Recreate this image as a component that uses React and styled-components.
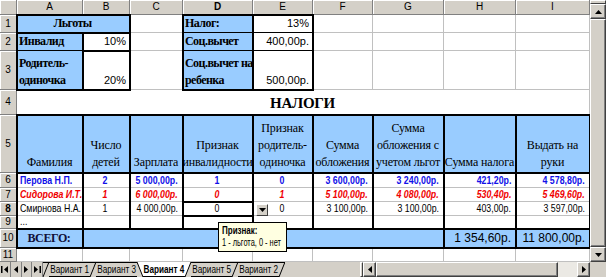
import React from 'react';
import styled, { createGlobalStyle, css } from 'styled-components';

const BLUE = '#99ccff';
const GRID = '#c0c0c0';
const FACE = '#d4d0c8';
const SHADOW = '#808080';
const DARK = '#404040';

const COL_WIDTHS = [66, 47, 53, 70, 60, 60, 71, 72, 74];
const ROW_HEIGHTS = [18, 18, 39, 25, 58, 15, 14, 14, 13, 19, 14];
const LETTERS = ['A', 'B', 'C', 'D', 'E', 'F', 'G', 'H', 'I'];
const ACTIVE = { r: 8, c: 4 };

const GlobalStyle = createGlobalStyle`
  html, body { margin: 0; padding: 0; overflow: hidden; background: #fff; }
  #root { width: 606px; height: 277px; }
`;

const Window = styled.div`
  width: 606px;
  height: 277px;
  display: flex;
  flex-direction: column;
  background: #fff;
  overflow: hidden;
  font-family: "Liberation Sans", Arial, sans-serif;
`;

const Workspace = styled.div`
  display: flex;
  height: 262px;
  flex: none;
`;

const Sheet = styled.div`
  position: relative;
  width: 590px;
  height: 262px;
  flex: none;
  display: grid;
  grid-template-columns: 17px ${COL_WIDTHS.map((w) => `${w}px`).join(' ')};
  grid-template-rows: 15px ${ROW_HEIGHTS.map((h) => `${h}px`).join(' ')};
  overflow: hidden;
`;

const headerBase = css`
  box-sizing: border-box;
  background: ${FACE};
  border-right: 1px solid ${SHADOW};
  border-bottom: 1px solid ${SHADOW};
  box-shadow: inset 1px 1px 0 #fff;
  display: flex;
  align-items: center;
  justify-content: center;
  font-family: "Liberation Sans", Arial, sans-serif;
  font-size: 10px;
  line-height: 1;
  font-weight: ${(p) => (p.$active ? 'bold' : 'normal')};
  color: #000;
  overflow: hidden;
`;

const Corner = styled.div`
  ${headerBase};
  grid-column: 1;
  grid-row: 1;
`;

const ColHead = styled.div`
  ${headerBase};
  grid-column: ${(p) => p.$c + 1};
  grid-row: 1;
`;

const RowHead = styled.div`
  ${headerBase};
  grid-column: 1;
  grid-row: ${(p) => p.$r + 1};
`;

const justify = { left: 'flex-start', center: 'center', right: 'flex-end' };

const Cell = styled.div`
  grid-column: ${(p) => p.$c + 1} / span ${(p) => p.$span || 1};
  grid-row: ${(p) => p.$r + 1};
  box-sizing: border-box;
  min-width: 0;
  display: flex;
  align-items: flex-end;
  justify-content: ${(p) => justify[p.$align || 'left']};
  text-align: ${(p) => p.$align || 'left'};
  padding: 0 3px 0 2px;
  background: ${(p) => p.$fill || '#fff'};
  border-right: 1px solid ${(p) => p.$fill || GRID};
  border-bottom: 1px solid ${(p) => p.$line || p.$fill || GRID};
  white-space: nowrap;
  overflow: hidden;
  color: #000;
`;

const LabelCell = styled(Cell)`
  font-family: "Liberation Serif", "Times New Roman", serif;
  font-weight: bold;
  font-size: 12px;
  line-height: 17px;
  letter-spacing: -0.55px;
  padding-left: 2px;
`;

const AmountCell = styled(Cell)`
  font-family: "Liberation Sans", Arial, sans-serif;
  font-size: 11px;
  line-height: 17px;
  padding-right: 3px;
`;

const TitleCell = styled(Cell)`
  align-items: center;
  font-family: "Liberation Serif", "Times New Roman", serif;
  font-weight: bold;
  font-size: 15px;
  line-height: 1;
  letter-spacing: -0.3px;
  padding-top: 2px;
`;

const HeadCell = styled(Cell)`
  font-family: "Liberation Serif", "Times New Roman", serif;
  font-size: 12px;
  line-height: 17px;
  letter-spacing: -0.15px;
  overflow: visible;
  padding: 0 1px 1px;
`;

const tones = {
  blue: css`color: #1010e8; font-weight: bold;`,
  red: css`color: #f00000; font-weight: bold; font-style: italic;`,
  plain: css`color: #000; font-weight: normal;`,
};

const DataCell = styled(Cell)`
  font-family: "Liberation Sans", Arial, sans-serif;
  font-size: 11px;
  line-height: 13px;
  padding: 0 4px 0 3px;
  ${(p) => tones[p.$tone || 'plain']};
`;

const TotalLabelCell = styled(Cell)`
  align-items: center;
  font-family: "Liberation Serif", "Times New Roman", serif;
  font-weight: bold;
  font-size: 12px;
  line-height: 1;
  letter-spacing: -0.4px;
  color: #10103a;
`;

const TotalAmountCell = styled(Cell)`
  align-items: center;
  font-family: "Liberation Sans", Arial, sans-serif;
  font-size: 12px;
  line-height: 1;
  padding-right: 4px;
`;

/* narrow face (Arial Narrow look): the glyphs are condensed horizontally */
const Narrow = styled.span`
  display: inline-block;
  flex: none;
  white-space: nowrap;
  transform: scaleX(${(p) => p.$k || 0.8});
  transform-origin: ${(p) => p.$align || 'left'} center;
`;

const Lines = styled.span`
  display: block;
`;

const Frame = styled.div`
  grid-column: ${(p) => p.$c1 + 1} / ${(p) => p.$c2 + 2};
  grid-row: ${(p) => p.$r1 + 1} / ${(p) => p.$r2 + 2};
  margin: -1px;
  border: 2px solid #000;
  pointer-events: none;
  z-index: 2;
`;

const DropButton = styled.div`
  grid-column: ${ACTIVE.c + 2};
  grid-row: ${ACTIVE.r + 1};
  justify-self: start;
  align-self: end;
  box-sizing: border-box;
  width: 12px;
  height: 12px;
  margin-left: 3px;
  background: ${FACE};
  border: 1px solid;
  border-color: #fff ${DARK} ${DARK} #fff;
  display: flex;
  align-items: center;
  justify-content: center;
  z-index: 3;
`;

const Tooltip = styled.div`
  position: absolute;
  left: 218px;
  top: 222px;
  width: 69px;
  height: 30px;
  box-sizing: border-box;
  padding: 2px 3px;
  background: #ffffe1;
  border: 1px solid #000;
  font-family: "Liberation Sans", Arial, sans-serif;
  font-size: 10px;
  line-height: 12px;
  color: #000;
  white-space: nowrap;
  overflow: hidden;
  z-index: 4;
`;

const TooltipLine = styled.div`
  font-weight: ${(p) => (p.$bold ? 'bold' : 'normal')};
`;

/* ---------- scrollbars & tabs ---------- */

const VScroll = styled.div`
  width: 16px;
  height: 262px;
  display: flex;
  flex-direction: column;
  background: ${FACE};
  flex: none;
`;

const SplitBox = styled.div`
  flex: none;
  box-sizing: border-box;
  width: ${(p) => (p.$vertical ? '3px' : '100%')};
  height: ${(p) => (p.$vertical ? '100%' : '4px')};
  background: ${FACE};
  border: 1px solid;
  border-color: #fff ${DARK} ${DARK} #fff;
`;

const ScrollButton = styled.div`
  flex: none;
  box-sizing: border-box;
  width: ${(p) => p.$w}px;
  height: ${(p) => p.$h}px;
  background: ${FACE};
  border: 1px solid;
  border-color: #fff ${DARK} ${DARK} #fff;
  box-shadow: inset -1px -1px 0 ${SHADOW};
  display: flex;
  align-items: center;
  justify-content: center;
`;

const Thumb = styled.div`
  flex: ${(p) => p.$grow || 1};
  box-sizing: border-box;
  background: ${FACE};
  border: 1px solid;
  border-color: #fff ${DARK} ${DARK} #fff;
  box-shadow: inset -1px -1px 0 ${SHADOW};
`;

const Track = styled.div`
  flex: ${(p) => p.$grow || 1};
  background: #ebe9e4;
`;

const TabBar = styled.div`
  display: flex;
  height: 15px;
  flex: none;
  background: ${FACE};
`;

const NavGroup = styled.div`
  display: flex;
  width: 43px;
  flex: none;
`;

const NavButton = styled.div`
  flex: 1;
  display: flex;
  align-items: center;
  justify-content: center;
  border-right: 1px solid ${SHADOW};
`;

const TabStrip = styled.div`
  display: flex;
  align-items: stretch;
`;

const Tab = styled.div`
  box-sizing: border-box;
  width: ${(p) => (p.$active ? 42 : 41)}px;
  height: 15px;
  flex: none;
  display: flex;
  align-items: center;
  justify-content: center;
  background: ${(p) => (p.$active ? '#fff' : FACE)};
  border-top: 1px solid ${(p) => (p.$active ? '#fff' : '#000')};
  border-bottom: 1px solid #000;
  font-family: "Liberation Sans", Arial, sans-serif;
  font-size: 10px;
  font-weight: ${(p) => (p.$active ? 'bold' : 'normal')};
  color: #000;
  white-space: nowrap;
`;

const EdgeSvg = styled.svg`
  display: block;
  flex: none;
`;

const HScroll = styled.div`
  display: flex;
  width: 230px;
  margin-left: auto;
  flex: none;
`;

const CornerBox = styled.div`
  width: 16px;
  flex: none;
  background: ${FACE};
`;

/* ---------- icons ---------- */

const Arrow = ({ dir, bar }) => {
  const pts = {
    up: '0,4 3.5,0 7,4',
    down: '0,0 7,0 3.5,4',
    left: '4,0 4,7 0,3.5',
    right: '0,0 0,7 4,3.5',
  }[dir];
  const vertical = dir === 'up' || dir === 'down';
  const w = vertical ? 7 : bar ? 7 : 4;
  const h = vertical ? 4 : 7;
  return (
    <svg width={w} height={h} viewBox={`0 0 ${w} ${h}`}>
      {bar === 'before' && <rect x="0" y="0" width="1.5" height="7" fill="#000" />}
      <polygon
        points={pts}
        fill="#000"
        transform={bar === 'before' ? 'translate(3 0)' : undefined}
      />
      {bar === 'after' && <rect x="5.5" y="0" width="1.5" height="7" fill="#000" />}
    </svg>
  );
};

const TabEdge = ({ kind }) => (
  <EdgeSvg width="6" height="15" viewBox="0 0 6 15">
    {kind === 'back' && <polygon points="0,0 6,0 6,15" fill="#fff" />}
    {kind === 'fwd' && <polygon points="0,0 6,0 0,15" fill="#fff" />}
    {kind === 'slash' && <line x1="0" y1="0.5" x2="6" y2="0.5" stroke="#000" strokeWidth="1" />}
    {kind === 'back' ? (
      <line x1="0" y1="0" x2="6" y2="15" stroke="#000" strokeWidth="1" />
    ) : (
      <line x1="0" y1="15" x2="6" y2="0" stroke="#000" strokeWidth="1" />
    )}
  </EdgeSvg>
);

/* ---------- data ---------- */

const cells = [
  { r: 1, c: 1, span: 2, k: 'label', align: 'center', text: 'Льготы', fill: BLUE },
  { r: 1, c: 4, k: 'label', text: 'Налог:', fill: BLUE, line: '#000' },
  { r: 1, c: 5, k: 'amount', align: 'right', text: '13%', line: '#000' },
  { r: 2, c: 1, k: 'label', text: 'Инвалид', fill: BLUE, line: '#000' },
  { r: 2, c: 2, k: 'amount', align: 'right', text: '10%' },
  { r: 2, c: 4, k: 'label', text: 'Соц.вычет', fill: BLUE, line: '#000' },
  { r: 2, c: 5, k: 'amount', align: 'right', text: '400,00р.', line: '#000' },
  { r: 3, c: 1, k: 'label', text: ['Родитель-', 'одиночка'], fill: BLUE },
  { r: 3, c: 2, k: 'amount', align: 'right', text: '20%' },
  { r: 3, c: 4, k: 'label', text: ['Соц.вычет на', 'ребенка'], fill: BLUE },
  { r: 3, c: 5, k: 'amount', align: 'right', text: '500,00р.' },
  { r: 4, c: 1, span: 9, k: 'title', align: 'center', text: 'НАЛОГИ' },
];

const headers = [
  'Фамилия',
  ['Число', 'детей'],
  'Зарплата',
  ['Признак', 'инвалидности'],
  ['Признак', 'родитель-', 'одиночка'],
  ['Сумма', 'обложения'],
  ['Сумма', 'обложения с', 'учетом льгот'],
  'Сумма налога',
  ['Выдать на', 'руки'],
];
headers.forEach((text, i) =>
  cells.push({ r: 5, c: i + 1, k: 'head', align: 'center', text, fill: BLUE })
);

const dataAligns = ['left', 'center', 'right', 'center', 'center', 'right', 'right', 'right', 'right'];
const dataRows = [
  { r: 6, tone: 'blue', values: ['Перова Н.П.', '2', '5 000,00р.', '1', '0', '3 600,00р.', '3 240,00р.', '421,20р.', '4 578,80р.'] },
  { r: 7, tone: 'red', values: ['Сидорова И.Т.', '1', '6 000,00р.', '0', '1', '5 100,00р.', '4 080,00р.', '530,40р.', '5 469,60р.'] },
  { r: 8, tone: 'plain', values: ['Смирнова Н.А.', '1', '4 000,00р.', '0', '0', '3 100,00р.', '3 100,00р.', '403,00р.', '3 597,00р.'] },
];
dataRows.forEach(({ r, tone, values }) =>
  values.forEach((text, i) =>
    cells.push({ r, c: i + 1, k: 'data', tone, align: dataAligns[i], text })
  )
);
cells.push({ r: 9, c: 1, k: 'data', tone: 'plain', text: '...' });
cells.push({ r: 10, c: 1, k: 'totalLabel', align: 'center', text: 'ВСЕГО:', fill: BLUE });
cells.push({ r: 10, c: 2, span: 6, k: 'empty', fill: BLUE });
cells.push({ r: 10, c: 8, k: 'totalAmount', align: 'right', text: '1 354,60р.', fill: BLUE });
cells.push({ r: 10, c: 9, k: 'totalAmount', align: 'right', text: '11 800,00р.', fill: BLUE });

// fill every uncovered position with an empty cell
const covered = new Set();
cells.forEach(({ r, c, span = 1 }) => {
  for (let i = 0; i < span; i += 1) covered.add(`${r}:${c + i}`);
});
for (let r = 1; r <= ROW_HEIGHTS.length; r += 1) {
  for (let c = 1; c <= 9; c += 1) {
    if (!covered.has(`${r}:${c}`)) cells.push({ r, c, k: 'empty' });
  }
}

const frames = [
  [1, 2, 1, 3],
  [1, 2, 1, 1],
  [2, 2, 2, 2],
  [2, 2, 3, 3],
  [4, 5, 1, 3],
  [4, 4, 1, 3],
  [1, 9, 5, 5],
  ...LETTERS.map((_, i) => [i + 1, i + 1, 5, 9]),
  [1, 1, 10, 10],
  [2, 7, 10, 10],
  [8, 8, 10, 10],
  [9, 9, 10, 10],
  [ACTIVE.c, ACTIVE.c, ACTIVE.r, ACTIVE.r],
];

const CELL_KINDS = {
  label: LabelCell,
  amount: AmountCell,
  title: TitleCell,
  head: HeadCell,
  data: DataCell,
  totalLabel: TotalLabelCell,
  totalAmount: TotalAmountCell,
  empty: Cell,
};

const renderText = (text, k, align) => {
  if (Array.isArray(text)) {
    return (
      <Lines>
        {text.map((line, i) => (
          <React.Fragment key={i}>
            {i > 0 && <br />}
            {line}
          </React.Fragment>
        ))}
      </Lines>
    );
  }
  if (k === 'data') return <Narrow $align={align}>{text}</Narrow>;
  return text;
};

const tabs = [
  { name: 'Вариант 1' },
  { name: 'Вариант 3' },
  { name: 'Вариант 4', active: true },
  { name: 'Вариант 5' },
  { name: 'Вариант 2' },
];

export default function App() {
  const activeIndex = tabs.findIndex((t) => t.active);
  return (
    <>
      <GlobalStyle />
      <Window>
        <Workspace>
          <Sheet>
            <Corner />
            {LETTERS.map((l, i) => (
              <ColHead key={l} $c={i + 1} $active={i + 1 === ACTIVE.c}>
                {l}
              </ColHead>
            ))}
            {ROW_HEIGHTS.map((_, i) => (
              <RowHead key={i} $r={i + 1} $active={i + 1 === ACTIVE.r}>
                {i + 1}
              </RowHead>
            ))}
            {cells.map(({ r, c, span, k, align, fill, line, tone, text }) => {
              const Comp = CELL_KINDS[k];
              return (
                <Comp
                  key={`${r}-${c}`}
                  $r={r}
                  $c={c}
                  $span={span}
                  $align={align}
                  $fill={fill}
                  $line={line}
                  $tone={tone}
                >
                  {text !== undefined && renderText(text, k, align)}
                </Comp>
              );
            })}
            {frames.map(([c1, c2, r1, r2], i) => (
              <Frame key={i} $c1={c1} $c2={c2} $r1={r1} $r2={r2} />
            ))}
            <DropButton>
              <Arrow dir="down" />
            </DropButton>
            <Tooltip>
              <TooltipLine $bold>
                <Narrow $k={0.8}>Признак:</Narrow>
              </TooltipLine>
              <TooltipLine>
                <Narrow $k={0.74}>1 - льгота, 0 - нет</Narrow>
              </TooltipLine>
            </Tooltip>
          </Sheet>
          <VScroll>
            <SplitBox />
            <ScrollButton $w={16} $h={15}>
              <Arrow dir="up" />
            </ScrollButton>
            <Thumb />
            <ScrollButton $w={16} $h={15}>
              <Arrow dir="down" />
            </ScrollButton>
          </VScroll>
        </Workspace>
        <TabBar>
          <NavGroup>
            <NavButton>
              <Arrow dir="left" bar="before" />
            </NavButton>
            <NavButton>
              <Arrow dir="left" />
            </NavButton>
            <NavButton>
              <Arrow dir="right" />
            </NavButton>
            <NavButton>
              <Arrow dir="right" bar="after" />
            </NavButton>
          </NavGroup>
          <TabStrip>
            {tabs.map((t, i) => (
              <React.Fragment key={t.name}>
                <TabEdge kind={i === activeIndex ? 'back' : i === activeIndex + 1 ? 'fwd' : 'slash'} />
                <Tab $active={t.active}>
                  <Narrow $k={0.82} $align="center">{t.name}</Narrow>
                </Tab>
              </React.Fragment>
            ))}
            <TabEdge kind={tabs.length === activeIndex + 1 ? 'fwd' : 'slash'} />
          </TabStrip>
          <HScroll>
            <SplitBox $vertical />
            <ScrollButton $w={13} $h={15}>
              <Arrow dir="left" />
            </ScrollButton>
            <Thumb $grow={182} />
            <Track $grow={19} />
            <ScrollButton $w={13} $h={15}>
              <Arrow dir="right" />
            </ScrollButton>
          </HScroll>
          <CornerBox />
        </TabBar>
      </Window>
    </>
  );
}
